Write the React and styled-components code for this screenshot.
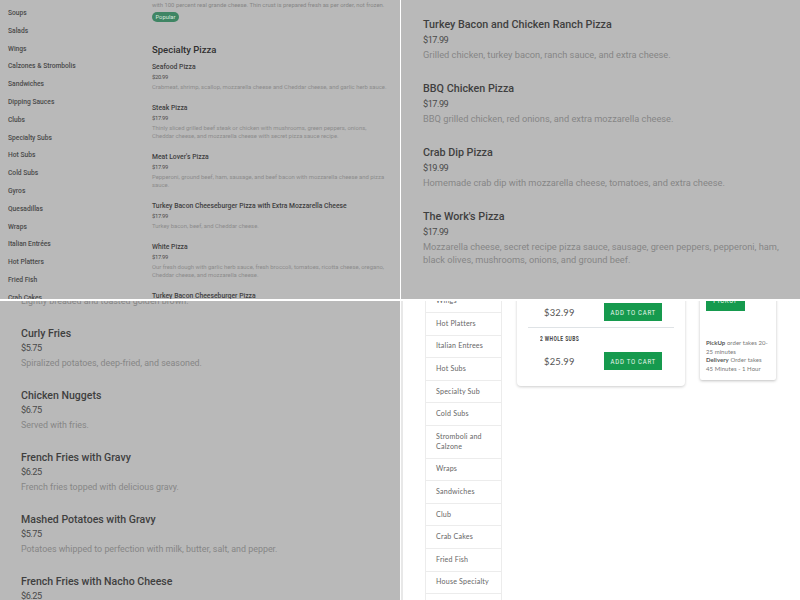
import React from "react";
import styled, { createGlobalStyle } from "styled-components";

const pizzaRight = [
  { name: "Turkey Bacon and Chicken Ranch Pizza", price: "$17.99", desc: "Grilled chicken, turkey bacon, ranch sauce, and extra cheese." },
  { name: "BBQ Chicken Pizza", price: "$17.99", desc: "BBQ grilled chicken, red onions, and extra mozzarella cheese." },
  { name: "Crab Dip Pizza", price: "$19.99", desc: "Homemade crab dip with mozzarella cheese, tomatoes, and extra cheese." },
  { name: "The Work's Pizza", price: "$17.99", desc: "Mozzarella cheese, secret recipe pizza sauce, sausage, green peppers, pepperoni, ham, black olives, mushrooms, onions, and ground beef." },
];

const sides = [
  { name: "Curly Fries", price: "$5.75", desc: "Spiralized potatoes, deep-fried, and seasoned." },
  { name: "Chicken Nuggets", price: "$6.75", desc: "Served with fries." },
  { name: "French Fries with Gravy", price: "$6.25", desc: "French fries topped with delicious gravy." },
  { name: "Mashed Potatoes with Gravy", price: "$5.75", desc: "Potatoes whipped to perfection with milk, butter, salt, and pepper." },
  { name: "French Fries with Nacho Cheese", price: "$6.25", desc: "French fries topped with melted nacho cheese." },
];

const categories = [
  "Soups", "Salads", "Wings", "Calzones & Strombolis", "Sandwiches", "Dipping Sauces", "Clubs", "Specialty Subs",
  "Hot Subs", "Cold Subs", "Gyros", "Quesadillas", "Wraps", "Italian Entrées", "Hot Platters", "Fried Fish", "Crab Cakes",
];

const specialty = [
  { name: "Seafood Pizza", price: "$20.99", desc: "Crabmeat, shrimp, scallop, mozzarella cheese and Cheddar cheese, and garlic herb sauce." },
  { name: "Steak Pizza", price: "$17.99", desc: "Thinly sliced grilled beef steak or chicken with mushrooms, green peppers, onions, Cheddar cheese, and mozzarella cheese with secret pizza sauce recipe." },
  { name: "Meat Lover's Pizza", price: "$17.99", desc: "Pepperoni, ground beef, ham, sausage, and beef bacon with mozzarella cheese and pizza sauce." },
  { name: "Turkey Bacon Cheeseburger Pizza with Extra Mozzarella Cheese", price: "$17.99", desc: "Turkey bacon, beef, and Cheddar cheese." },
  { name: "White Pizza", price: "$17.99", desc: "Our fresh dough with garlic herb sauce, fresh broccoli, tomatoes, ricotta cheese, oregano, Cheddar cheese, and mozzarella cheese." },
  { name: "Turkey Bacon Cheeseburger Pizza", price: "$17.99", desc: "Turkey bacon, beef, and Cheddar cheese." },
];

const storeLinks = [
  "Wings", "Hot Platters", "Italian Entrees", "Hot Subs", "Specialty Sub", "Cold Subs", "Stromboli and Calzone",
  "Wraps", "Sandwiches", "Club", "Crab Cakes", "Fried Fish", "House Specialty", "Gyros",
];

const GlobalStyle = createGlobalStyle`
  html, body {
    margin: 0;
    padding: 0;
    background: #fff;
    overflow: hidden;
  }
  * {
    box-sizing: border-box;
  }
`;

const Sheet = styled.div`
  display: grid;
  grid-template-columns: 400px 399px;
  grid-template-rows: 299px 299px;
  column-gap: 1px;
  row-gap: 2px;
  width: 800px;
  height: 600px;
`;

const GrayPanel = styled.section`
  background: #b9b9b9;
  overflow: hidden;
  font-family: Roboto, "Liberation Sans", sans-serif;
`;

const LargeMenu = styled.div`
  padding: ${(p) => p.$top}px 10px 0 ${(p) => p.$left}px;
`;

const LargeItem = styled.div`
  margin-bottom: ${(p) => (p.$tight ? 19.5 : 21)}px;
`;

const LargeName = styled.h3`
  margin: 0;
  font-size: ${(p) => (p.$tight ? 10.55 : 10.75)}px;
  line-height: 14px;
  font-weight: 500;
  color: #3f3f3f;
`;

const LargePrice = styled.div`
  margin-top: ${(p) => (p.$tight ? 1 : 2)}px;
  font-size: 9.2px;
  line-height: 12px;
  letter-spacing: -0.5px;
  color: #4a4a4a;
`;

const LargeDesc = styled.p`
  margin: ${(p) => (p.$tight ? 2.5 : 2)}px 0 0;
  font-size: ${(p) => (p.$tight ? 8.9 : 9.25)}px;
  line-height: 13px;
  color: #868686;
`;

const ClippedLine = styled.p`
  margin: -6px 0 19px;
  font-size: 8.9px;
  line-height: 13px;
  color: #868686;
`;

const SmallLayout = styled.div`
  display: grid;
  grid-template-columns: 152px 1fr;
`;

const CategoryList = styled.ul`
  list-style: none;
  margin: 5px 0 0;
  padding: 0 0 0 8px;
`;

const Category = styled.li`
  font-size: 6.7px;
  line-height: 17.8px;
  font-weight: 500;
  color: #4a4a4a;
  white-space: nowrap;
`;

const SmallColumn = styled.div`
  width: 235px;
  padding-top: 1px;
`;

const SmallIntro = styled.p`
  margin: 0;
  font-size: 5.9px;
  line-height: 8px;
  color: #868686;
`;

const Badge = styled.span`
  display: block;
  width: fit-content;
  margin-top: 3px;
  padding: 0 3.5px;
  height: 10px;
  border-radius: 5px;
  background: #3f8564;
  color: #d8e8df;
  font-size: 5.8px;
  line-height: 10px;
`;

const SectionTitle = styled.h2`
  margin: 21px 0 0;
  font-size: 9.5px;
  line-height: 14px;
  font-weight: 500;
  color: #2f2f2f;
`;

const SmallItem = styled.div`
  margin-top: ${(p) => (p.$first ? 5.5 : 13)}px;
`;

const SmallName = styled.h4`
  margin: 0;
  font-size: 6.8px;
  line-height: 9px;
  font-weight: 500;
  color: #3f3f3f;
`;

const SmallPrice = styled.div`
  margin-top: 1.5px;
  font-size: 5.8px;
  line-height: 8px;
  letter-spacing: -0.3px;
  color: #4a4a4a;
`;

const SmallDesc = styled.p`
  margin: 1.5px 0 0;
  font-size: 5.9px;
  line-height: 8px;
  color: #8c8c8c;
`;

const StorePanel = styled.section`
  display: flex;
  align-items: flex-start;
  overflow: hidden;
  background: #fff;
  border-left: 2px solid #e8e8e8;
  padding-left: 22px;
  font-family: Lato, "Liberation Sans", sans-serif;
`;

const StoreNav = styled.ul`
  flex: none;
  width: 77px;
  margin: -10.5px 0 0;
  padding: 0;
  list-style: none;
  border-left: 1px solid #ececec;
  border-right: 1px solid #ececec;
`;

const StoreLink = styled.li`
  padding: 5.8px 10px;
  border-bottom: 1px solid #ececec;
  font-size: 7.1px;
  line-height: 10px;
  letter-spacing: 0.2px;
  color: #666;
`;

const OrderCard = styled.div`
  flex: none;
  width: 168px;
  margin: -20px 0 0 15px;
  padding: 22px 11px 16px;
  background: #fff;
  border-radius: 4px;
  box-shadow: 0 1px 3px rgba(0, 0, 0, 0.2);
`;

const OrderRow = styled.div`
  display: flex;
  align-items: center;
  justify-content: space-between;
  padding: 0 12px 0 16px;
`;

const Price = styled.span`
  font-size: 9.4px;
  letter-spacing: 0.2px;
  color: #555;
`;

const GreenButton = styled.button`
  display: flex;
  align-items: center;
  justify-content: center;
  flex: none;
  width: ${(p) => (p.$small ? 39 : 58)}px;
  height: ${(p) => (p.$small ? 22 : 18)}px;
  margin-bottom: ${(p) => (p.$small ? 28 : 0)}px;
  padding: 0;
  border: 0;
  background: #169a4e;
  color: #e9f7ee;
  white-space: nowrap;
`;

// no condensed family is installed, so the label is squeezed sideways
const Condensed = styled.span`
  display: block;
  transform: scaleX(0.75);
  font-family: Roboto, "Liberation Sans", sans-serif;
  font-size: 8px;
  line-height: 9px;
  letter-spacing: 1px;
`;

const Divider = styled.hr`
  margin: 6px 0 0;
  border: 0;
  border-top: 1px solid #dfe3e6;
`;

const SizeLabel = styled.div`
  margin: 7px 0 8px 0;
  padding-left: 12px;
  transform: scaleX(0.7);
  transform-origin: 12px 0;
  font-family: Roboto, "Liberation Sans", sans-serif;
  font-size: 7px;
  line-height: 9px;
  font-weight: 700;
  letter-spacing: 0.6px;
  color: #444;
`;

const PickupCard = styled.div`
  flex: none;
  width: 76px;
  height: 108px;
  margin: -29px 0 0 15px;
  padding: 0 6px;
  background: #fff;
  border-radius: 2px;
  box-shadow: 0 1px 3px rgba(0, 0, 0, 0.25);
  display: flex;
  flex-direction: column;
  justify-content: flex-end;
`;

const PickupNote = styled.p`
  margin: 0 0 7px;
  font-size: 6px;
  line-height: 8.5px;
  letter-spacing: 0.05px;
  color: #777;
  strong {
    color: #555;
    font-weight: 700;
  }
`;

const LargeList = ({ items, tight }) =>
  items.map((item) => (
    <LargeItem key={item.name} $tight={tight}>
      <LargeName $tight={tight}>{item.name}</LargeName>
      <LargePrice $tight={tight}>{item.price}</LargePrice>
      <LargeDesc $tight={tight}>{item.desc}</LargeDesc>
    </LargeItem>
  ));

const App = () => (
  <>
    <GlobalStyle />
    <Sheet>
      <GrayPanel>
        <SmallLayout>
          <CategoryList>
            {categories.map((c) => (
              <Category key={c}>{c}</Category>
            ))}
          </CategoryList>
          <SmallColumn>
            <SmallIntro>with 100 percent real grande cheese. Thin crust is prepared fresh as per order, not frozen.</SmallIntro>
            <Badge>Popular</Badge>
            <SectionTitle>Specialty Pizza</SectionTitle>
            {specialty.map((item, i) => (
              <SmallItem key={item.name} $first={i === 0}>
                <SmallName>{item.name}</SmallName>
                <SmallPrice>{item.price}</SmallPrice>
                <SmallDesc>{item.desc}</SmallDesc>
              </SmallItem>
            ))}
          </SmallColumn>
        </SmallLayout>
      </GrayPanel>

      <GrayPanel>
        <LargeMenu $top={18} $left={22}>
          <LargeList items={pizzaRight} />
        </LargeMenu>
      </GrayPanel>

      <GrayPanel>
        <LargeMenu $top={0} $left={21}>
          <ClippedLine>Lightly breaded and toasted golden brown.</ClippedLine>
          <LargeList items={sides} tight />
        </LargeMenu>
      </GrayPanel>

      <StorePanel>
        <StoreNav>
          {storeLinks.map((l) => (
            <StoreLink key={l}>{l}</StoreLink>
          ))}
        </StoreNav>
        <OrderCard>
          <OrderRow>
            <Price>$32.99</Price>
            <GreenButton>
              <Condensed>ADD TO CART</Condensed>
            </GreenButton>
          </OrderRow>
          <Divider />
          <SizeLabel>2 WHOLE SUBS</SizeLabel>
          <OrderRow>
            <Price>$25.99</Price>
            <GreenButton>
              <Condensed>ADD TO CART</Condensed>
            </GreenButton>
          </OrderRow>
        </OrderCard>
        <PickupCard>
          <GreenButton $small>
            <Condensed>PICKUP</Condensed>
          </GreenButton>
          <PickupNote>
            <strong>PickUp</strong> order takes 20-25 minutes
            <br />
            <strong>Delivery</strong> Order takes 45 Minutes - 1 Hour
          </PickupNote>
        </PickupCard>
      </StorePanel>
    </Sheet>
  </>
);

export default App;
